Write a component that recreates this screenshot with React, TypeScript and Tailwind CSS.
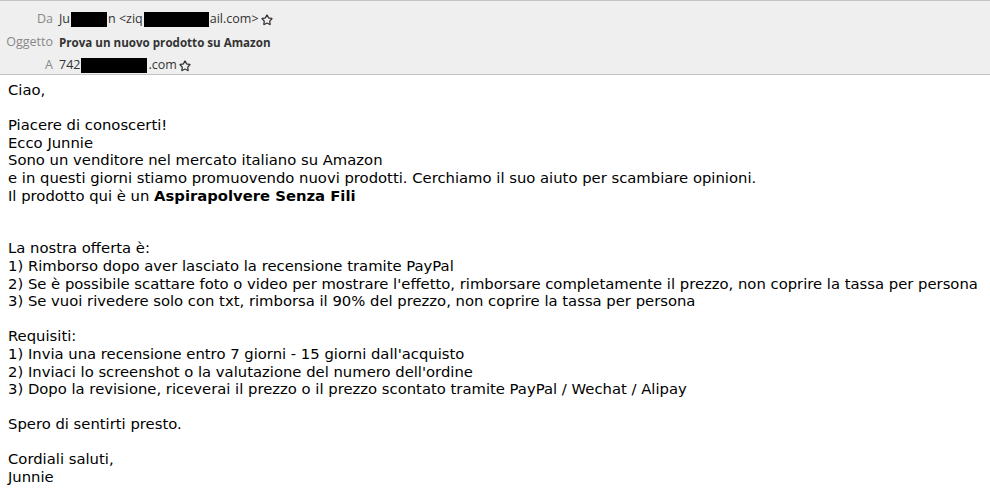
import { Star } from "lucide-react";

function Redact({ w }: { w: number }) {
  return <span className="mx-[1px] inline-block h-[15px] bg-black" style={{ width: w }} />;
}

export default function App() {
  return (
    <div className="w-[990px] h-[492px] bg-white overflow-hidden">
      {/* Header */}
      <div className="h-[75px] bg-[#efefef] border-t border-b border-[#c4c4c4] pt-[7px] font-['Open_Sans',sans-serif] text-[12.5px] text-[#333]">
        <div className="flex h-[23px] items-center">
          <span className="w-[59px] text-right pr-[6px] text-[#888]">Da</span>
          <span className="flex items-center">
            Ju<Redact w={36} />n &lt;ziq<Redact w={65} />ail.com&gt;
            <Star className="ml-[2px] h-[12px] w-[12px]" strokeWidth={2.5} />
          </span>
        </div>
        <div className="flex h-[23px] items-center">
          <span className="w-[59px] text-right pr-[6px] text-[#888]">Oggetto</span>
          <span className="font-bold text-[11.6px]">Prova un nuovo prodotto su Amazon</span>
        </div>
        <div className="flex h-[23px] items-center">
          <span className="w-[59px] text-right pr-[6px] text-[#888]">A</span>
          <span className="flex items-center">
            742<Redact w={66} />.com
            <Star className="ml-[2px] h-[12px] w-[12px]" strokeWidth={2.5} />
          </span>
        </div>
      </div>

      {/* Body */}
      <div className="px-[8px] pt-[6px] font-['DejaVu_Sans',sans-serif] text-[14.8px] leading-[17.6px] text-black">
        <p>Ciao,</p>
        <br />
        <p>Piacere di conoscerti!</p>
        <p>Ecco Junnie</p>
        <p>Sono un venditore nel mercato italiano su Amazon</p>
        <p>e in questi giorni stiamo promuovendo nuovi prodotti. Cerchiamo il suo aiuto per scambiare opinioni.</p>
        <p>
          Il prodotto qui è un <b>Aspirapolvere Senza Fili</b>
        </p>
        <br />
        <br />
        <p>La nostra offerta è:</p>
        <p>1) Rimborso dopo aver lasciato la recensione tramite PayPal</p>
        <p>2) Se è possibile scattare foto o video per mostrare l'effetto, rimborsare completamente il prezzo, non coprire la tassa per persona</p>
        <p>3) Se vuoi rivedere solo con txt, rimborsa il 90% del prezzo, non coprire la tassa per persona</p>
        <br />
        <p>Requisiti:</p>
        <p>1) Invia una recensione entro 7 giorni - 15 giorni dall'acquisto</p>
        <p>2) Inviaci lo screenshot o la valutazione del numero dell'ordine</p>
        <p>3) Dopo la revisione, riceverai il prezzo o il prezzo scontato tramite PayPal / Wechat / Alipay</p>
        <br />
        <p>Spero di sentirti presto.</p>
        <br />
        <p>Cordiali saluti,</p>
        <p>Junnie</p>
      </div>
    </div>
  );
}
